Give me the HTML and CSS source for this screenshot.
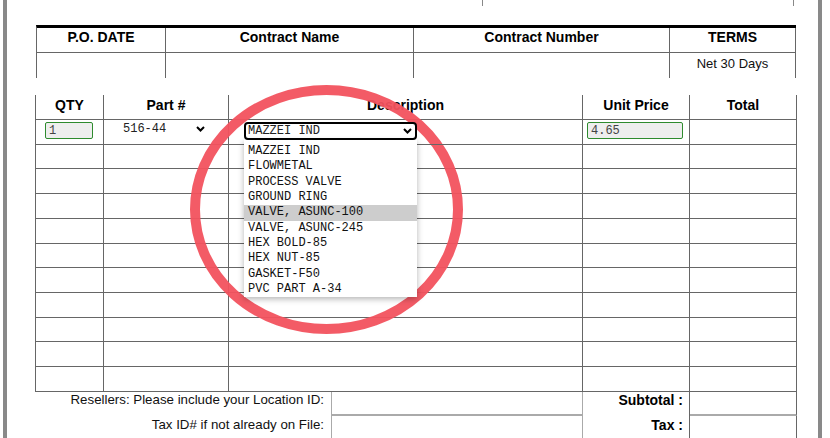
FILE: index.html
```html
<!DOCTYPE html>
<html lang="en">
<head>
    <meta charset="UTF-8">
    <meta name="viewport" content="width=device-width, initial-scale=1.0">
    <title>Purchase Order</title>
    <link rel="stylesheet" href="styles.css">
</head>
<body>
    <div class="page">
        <div class="prev-row">
            <div class="prev-label">Phone :</div>
            <div class="prev-value"></div>
        </div>

        <div class="info-grid">
            <div class="head">P.O. DATE</div>
            <div class="head">Contract Name</div>
            <div class="head">Contract Number</div>
            <div class="head">TERMS</div>
            <div class="val"></div>
            <div class="val"></div>
            <div class="val"></div>
            <div class="val">Net 30 Days</div>
        </div>

        <div class="items-grid">
            <div class="head">QTY</div>
            <div class="head">Part #</div>
            <div class="head">Description</div>
            <div class="head">Unit Price</div>
            <div class="head">Total</div>

            <div class="cell"><input type="text" class="field qty" value="1" readonly></div>
            <div class="cell">
                <div class="part-select">
                    <span>516-44</span>
                    <svg class="chevron" width="9" height="6" viewBox="0 0 9 6"><path d="M1 1l3.5 3.5L8 1"/></svg>
                </div>
            </div>
            <div class="cell desc-cell">
                <div class="combo">
                    <div class="combo-box">
                        <span>MAZZEI IND</span>
                        <svg class="chevron" width="9" height="6" viewBox="0 0 9 6"><path d="M1 1l3.5 3.5L8 1"/></svg>
                    </div>
                    <ul class="combo-list">
                        <li>MAZZEI IND</li>
                        <li>FLOWMETAL</li>
                        <li>PROCESS VALVE</li>
                        <li>GROUND RING</li>
                        <li class="hover">VALVE, ASUNC-100</li>
                        <li>VALVE, ASUNC-245</li>
                        <li>HEX BOLD-85</li>
                        <li>HEX NUT-85</li>
                        <li>GASKET-F50</li>
                        <li>PVC PART A-34</li>
                    </ul>
                </div>
            </div>
            <div class="cell"><input type="text" class="field price" value="4.65" readonly></div>
            <div class="cell"></div>

            <div class="cell"></div><div class="cell"></div><div class="cell"></div><div class="cell"></div><div class="cell"></div>
            <div class="cell"></div><div class="cell"></div><div class="cell"></div><div class="cell"></div><div class="cell"></div>
            <div class="cell"></div><div class="cell"></div><div class="cell"></div><div class="cell"></div><div class="cell"></div>
            <div class="cell"></div><div class="cell"></div><div class="cell"></div><div class="cell"></div><div class="cell"></div>
            <div class="cell"></div><div class="cell"></div><div class="cell"></div><div class="cell"></div><div class="cell"></div>
            <div class="cell"></div><div class="cell"></div><div class="cell"></div><div class="cell"></div><div class="cell"></div>
            <div class="cell"></div><div class="cell"></div><div class="cell"></div><div class="cell"></div><div class="cell"></div>
            <div class="cell"></div><div class="cell"></div><div class="cell"></div><div class="cell"></div><div class="cell"></div>
            <div class="cell"></div><div class="cell"></div><div class="cell"></div><div class="cell"></div><div class="cell"></div>
            <div class="cell"></div><div class="cell"></div><div class="cell"></div><div class="cell"></div><div class="cell"></div>
        </div>

        <div class="totals-grid">
            <div class="note">Resellers: Please include your Location ID:</div>
            <div class="box"></div>
            <div class="sum-label">Subtotal :</div>
            <div class="sum-value"></div>

            <div class="note second">Tax ID# if not already on File:</div>
            <div class="box"></div>
            <div class="sum-label second">Tax :</div>
            <div class="sum-value"></div>
        </div>
    </div>

    <!-- red markup circle drawn over the screenshot -->
    <svg class="markup" width="830" height="438" viewBox="0 0 830 438">
        <ellipse cx="326.5" cy="209.5" rx="131.5" ry="119.5"/>
    </svg>
</body>
</html>
```

FILE: styles.css
```css
body {
    margin: 0;
    background-color: #fff;
    font-family: 'Liberation Sans', Arial, sans-serif;
    color: #111;
    position: relative;
    overflow: hidden;
    height: 438px;
}

.page {
    margin-left: 3px;
    width: 811px;
    min-height: 440px;
    border-left: 4px solid #898989;
    border-right: 4px solid #898989;
}

/* tail of the table above, mostly scrolled out */
.prev-row {
    display: flex;
    height: 6px;
    overflow: hidden;
}

.prev-label {
    width: 469px;
    padding-right: 6px;
    text-align: right;
    font-size: 13px;
    line-height: 16px;
    margin-top: -13px;
    color: #bbb;
}

.prev-value {
    width: 310px;
    border-left: 1px solid #888;
    border-right: 1px solid #888;
}

.head {
    font-weight: bold;
    font-size: 14px;
    line-height: 16px;
    color: #000;
    text-align: center;
}

/* P.O. date / contract / terms */
.info-grid {
    display: grid;
    grid-template-columns: 129px 248px 256px 126px;
    grid-template-rows: 25px 25px;
    width: max-content;
    margin: 19px 0 0 29px;
    border-top: 3px solid #000;
    border-left: 1px solid #666;
}

.info-grid > div {
    box-sizing: border-box;
    border-right: 1px solid #666;
}

.info-grid .head {
    border-bottom: 1px solid #666;
    padding-top: 1px;
}

.info-grid .val {
    font-size: 13px;
    line-height: 16px;
    text-align: center;
    padding-top: 3px;
}

/* line items */
.items-grid {
    display: grid;
    grid-template-columns: 68px 125px 354px 107px 107px;
    grid-template-rows: 25px repeat(11, 24.727px);
    width: max-content;
    margin: 17px 0 0 28px;
    border-left: 1px solid #666;
}

.items-grid > div {
    box-sizing: border-box;
    border-right: 1px solid #666;
    border-bottom: 1px solid #666;
}

.items-grid .head {
    padding-top: 2px;
}

.field {
    display: block;
    box-sizing: border-box;
    height: 17px;
    margin-top: 2px;
    padding: 0 3px;
    border: 1px solid #2e8b2e;
    border-radius: 2px;
    background-color: #eee;
    font-family: 'Liberation Mono', 'Courier New', monospace;
    font-size: 12px;
    color: #444;
    outline: none;
}

.qty {
    width: 48px;
    margin-left: 9px;
}

.price {
    width: 96px;
    margin-left: 4px;
}

.chevron {
    display: block;
    flex: none;
}

.chevron path {
    fill: none;
    stroke: #000;
    stroke-width: 2;
}

.part-select {
    display: flex;
    align-items: center;
    justify-content: space-between;
    width: 82px;
    height: 18px;
    margin-left: 19px;
    font-family: 'Liberation Mono', 'Courier New', monospace;
    font-size: 12px;
    color: #222;
}

.desc-cell {
    position: relative;
    z-index: 5;
}

.combo {
    position: relative;
    width: 173px;
    margin: 2px 0 0 15px;
    font-family: 'Liberation Mono', 'Courier New', monospace;
    font-size: 12px;
}

.combo-box {
    display: flex;
    align-items: center;
    justify-content: space-between;
    box-sizing: border-box;
    height: 18px;
    padding: 0 3px 0 2px;
    border: 2px solid #000;
    border-radius: 4px;
    background-color: #fff;
    color: #222;
}

.combo-list {
    position: absolute;
    top: 100%;
    left: 0;
    width: 100%;
    margin: 0;
    padding: 4px 0 0;
    list-style: none;
    background-color: #fff;
    box-shadow: 0 2px 6px rgba(0, 0, 0, 0.3);
    color: #111;
}

.combo-list li {
    height: 15.33px;
    line-height: 15px;
    padding-left: 4px;
    white-space: nowrap;
}

.combo-list li.hover {
    background-color: #cdcdcd;
}

/* totals at the bottom */
.totals-grid {
    display: grid;
    grid-template-columns: 296px 252px 107px 107px;
    grid-template-rows: 24px 25px;
    width: max-content;
    margin-left: 28px;
}

.totals-grid > div {
    box-sizing: border-box;
}

.note {
    font-size: 13.3px;
    line-height: 16px;
    text-align: right;
    padding-right: 7px;
}

.note.second {
    padding-top: 1px;
}

.box {
    border-left: 1px solid #aaa;
    border-right: 1px solid #aaa;
    border-bottom: 2px solid #aaa;
}

.sum-label {
    font-weight: bold;
    font-size: 14px;
    line-height: 16px;
    color: #000;
    text-align: right;
    padding-right: 6px;
    border-right: 1px solid #666;
}

.sum-label.second {
    padding-top: 1px;
}

.sum-value {
    border-right: 1px solid #666;
    border-bottom: 2px solid #aaa;
}

.markup {
    position: absolute;
    left: 0;
    top: 0;
    pointer-events: none;
}

.markup ellipse {
    fill: none;
    stroke: #f2525e;
    stroke-width: 10;
    opacity: 0.95;
}
```
